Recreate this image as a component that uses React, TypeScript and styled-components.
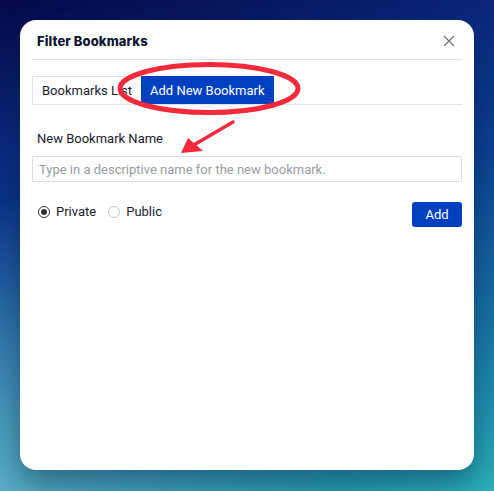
import React, { useState } from 'react';
import styled, { createGlobalStyle } from 'styled-components';

const GlobalStyle = createGlobalStyle`
  html, body {
    margin: 0;
    padding: 0;
  }
  body {
    font-family: Roboto, "Liberation Sans", sans-serif;
  }
  * {
    box-sizing: border-box;
  }
`;

const Page = styled.div`
  position: relative;
  width: 494px;
  height: 491px;
  padding: 20px;
  overflow: hidden;
  background:
    radial-gradient(ellipse 70% 60% at 0% 100%, rgba(110, 190, 205, 0.75), rgba(110, 190, 205, 0) 100%),
    linear-gradient(165deg, #050848 0%, #0a2a80 25%, #0b3f92 45%, #1a78a8 75%, #2ab2b8 100%);
`;

const Modal = styled.div`
  width: 454px;
  height: 450px;
  background: #fff;
  border-radius: 16px;
  padding: 0 12px;
  box-shadow: 0 14px 30px rgba(4, 30, 60, 0.45);
  display: flex;
  flex-direction: column;
`;

const Header = styled.div`
  height: 40px;
  display: flex;
  align-items: center;
  justify-content: space-between;
  padding: 2px 5px 0 5px;
  border-bottom: 1px solid #e2e2e2;
`;

const Title = styled.h2`
  margin: 0;
  font-family: Inter, "Liberation Sans", sans-serif;
  font-size: 13px;
  font-weight: 800;
  color: #0d1530;
  letter-spacing: 0.1px;
`;

const CloseButton = styled.button`
  border: none;
  background: none;
  padding: 0;
  width: 16px;
  height: 16px;
  display: flex;
  align-items: center;
  justify-content: center;
  cursor: pointer;
`;

const TabList = styled.div`
  display: flex;
  margin-top: 16px;
  height: 29px;
  border-bottom: 1px solid #e2e2e2;
`;

const Tab = styled.button<{ $active: boolean }>`
  border: none;
  font-family: inherit;
  font-size: 13px;
  padding: 0 9px;
  height: 28px;
  cursor: pointer;
  background: ${p => (p.$active ? '#0040c0' : '#fff')};
  color: ${p => (p.$active ? '#fff' : '#1c2030')};
  border-left: ${p => (p.$active ? 'none' : '1px solid #e2e2e2')};
  border-top: ${p => (p.$active ? 'none' : '1px solid #e2e2e2')};
`;

const Form = styled.div`
  padding-top: 26px;
  display: flex;
  flex-direction: column;
`;

const Label = styled.label`
  font-size: 13px;
  color: #1c2030;
  padding-left: 5px;
  line-height: 16px;
`;

const TextInput = styled.input`
  margin-top: 9px;
  height: 26px;
  border: 1px solid #dcdcdc;
  border-radius: 1px;
  padding: 0 6px;
  font-family: inherit;
  font-size: 13px;
  color: #222;
  &::placeholder {
    color: #9a9ca4;
  }
  &:focus {
    outline: none;
  }
`;

const OptionsRow = styled.div`
  margin-top: 20px;
  display: flex;
  align-items: flex-start;
  justify-content: space-between;
`;

const RadioGroup = styled.div`
  display: flex;
  gap: 12px;
  padding-left: 6px;
  margin-top: 2px;
`;

const RadioLabel = styled.label`
  display: flex;
  align-items: center;
  gap: 6px;
  font-size: 13px;
  color: #1c2030;
  cursor: pointer;
`;

const RadioDot = styled.span<{ $checked: boolean }>`
  width: 12px;
  height: 12px;
  border-radius: 50%;
  border: 1px solid ${p => (p.$checked ? '#333' : '#c8c8cc')};
  display: flex;
  align-items: center;
  justify-content: center;
  &::after {
    content: '';
    width: 6px;
    height: 6px;
    border-radius: 50%;
    background: ${p => (p.$checked ? '#333' : 'transparent')};
  }
`;

const AddButton = styled.button`
  width: 50px;
  height: 25px;
  border: none;
  border-radius: 3px;
  background: #0040c0;
  color: #fff;
  font-family: inherit;
  font-size: 13px;
  cursor: pointer;
`;

const Annotation = styled.svg`
  position: absolute;
  left: 0;
  top: 0;
  width: 494px;
  height: 491px;
  pointer-events: none;
`;

const App: React.FC = () => {
  const [tab, setTab] = useState<'list' | 'add'>('add');
  const [visibility, setVisibility] = useState<'private' | 'public'>('private');

  return (
    <Page>
      <GlobalStyle />
      <Modal>
        <Header>
          <Title>Filter Bookmarks</Title>
          <CloseButton aria-label="Close">
            <svg width="12" height="12" viewBox="0 0 12 12">
              <path d="M1 1L11 11M11 1L1 11" stroke="#6b7080" strokeWidth="1.2" />
            </svg>
          </CloseButton>
        </Header>
        <TabList>
          <Tab $active={tab === 'list'} onClick={() => setTab('list')}>
            Bookmarks List
          </Tab>
          <Tab $active={tab === 'add'} onClick={() => setTab('add')}>
            Add New Bookmark
          </Tab>
        </TabList>
        <Form>
          <Label>New Bookmark Name</Label>
          <TextInput placeholder="Type in a descriptive name for the new bookmark." />
          <OptionsRow>
            <RadioGroup>
              <RadioLabel onClick={() => setVisibility('private')}>
                <RadioDot $checked={visibility === 'private'} />
                Private
              </RadioLabel>
              <RadioLabel onClick={() => setVisibility('public')}>
                <RadioDot $checked={visibility === 'public'} />
                Public
              </RadioLabel>
            </RadioGroup>
            <AddButton>Add</AddButton>
          </OptionsRow>
        </Form>
      </Modal>
      <Annotation viewBox="0 0 494 491">
        <ellipse cx="209" cy="88.5" rx="89" ry="24" fill="none" stroke="#f32a3c" strokeWidth="5" />
        <line x1="233" y1="122" x2="192" y2="146" stroke="#f32a3c" strokeWidth="3.5" strokeLinecap="round" />
        <polygon points="181,153 188,138 203,151" fill="#f32a3c" />
      </Annotation>
    </Page>
  );
};

export default App;
